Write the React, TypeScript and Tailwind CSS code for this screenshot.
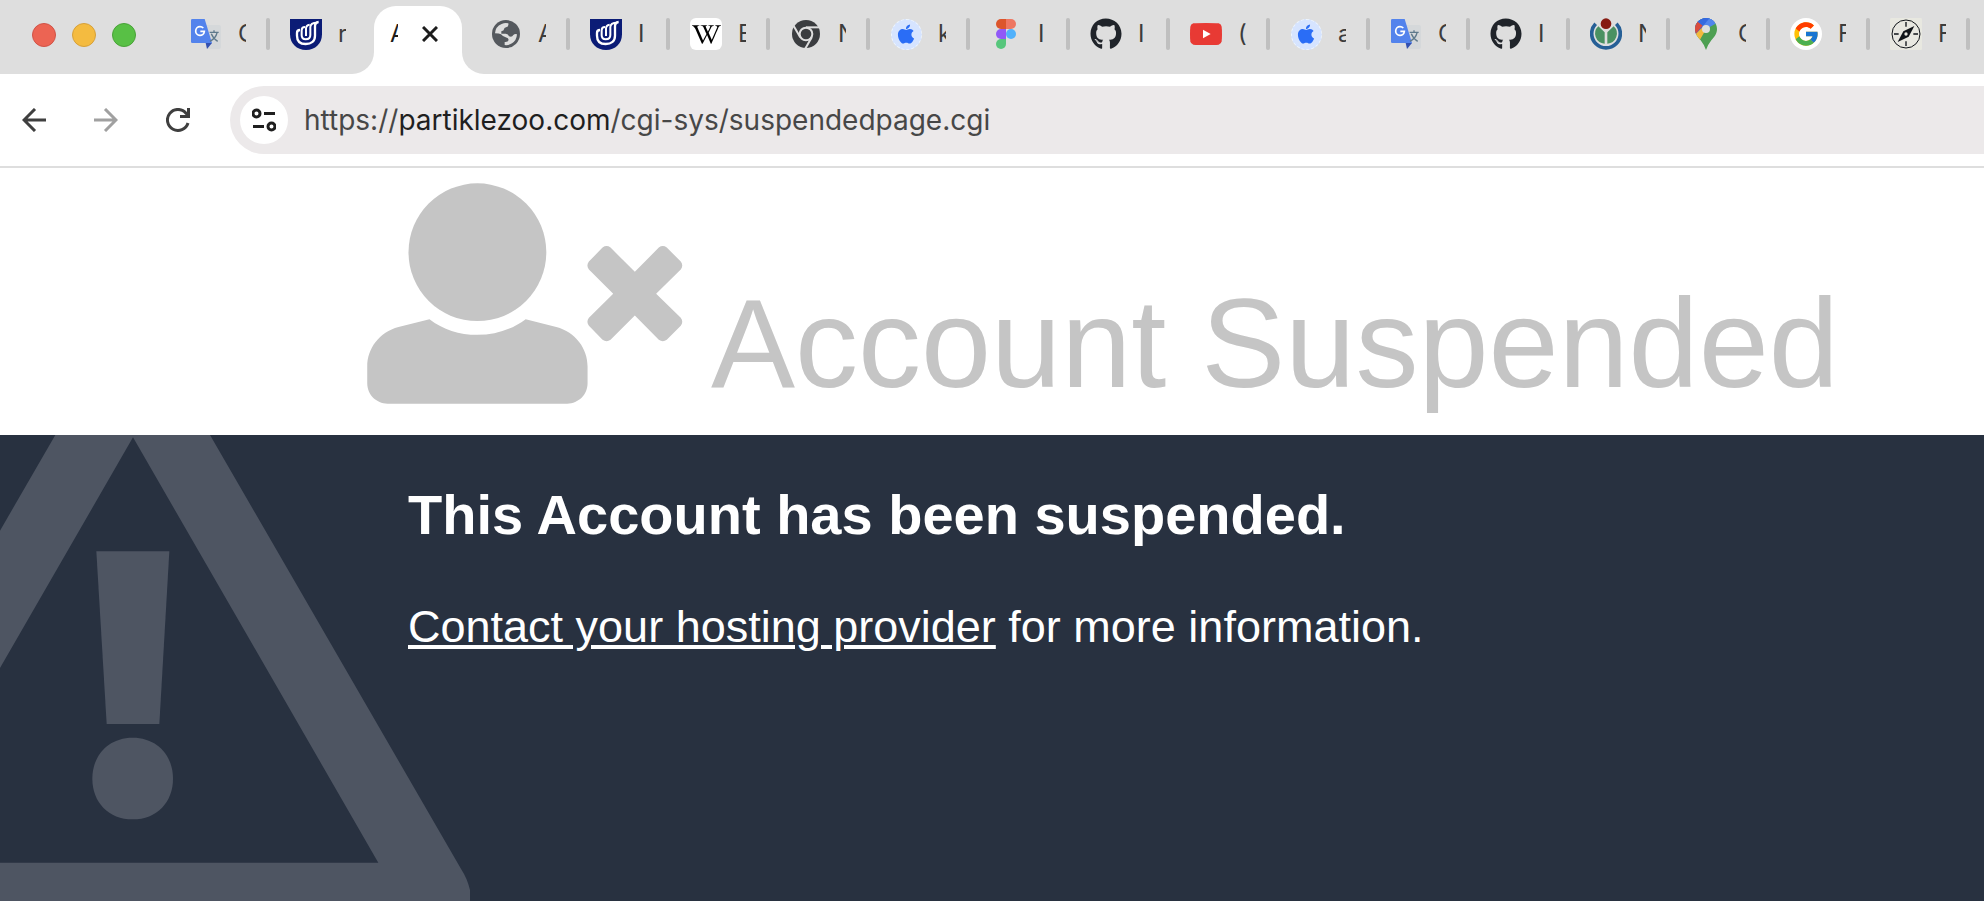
import type { ReactNode } from "react";
import { FaApple, FaGithub, FaWikipediaW } from "react-icons/fa";
import { FcGoogle } from "react-icons/fc";

const TranslateIcon = () => (
  <svg viewBox="0 0 90 90" className="size-[30px]" aria-hidden="true">
    <path d="M36 18H84Q90 18 90 24V84Q90 90 84 90H50Z" fill="#d5d8da" />
    <path d="M44 72H63L48 90Z" fill="#3350b0" />
    <path d="M4 0H41L63 72H4Q0 72 0 68V4Q0 0 4 0Z" fill="#5383ec" />
    <path d="M56 40H83M69 34V40M61 44Q66 58 80 67M78 42Q74 58 57 67" fill="none" stroke="#5f7a8c" strokeWidth="4" />
    <path d="M37 27Q33 23 27 23A13 13 0 1 0 40 37H28" fill="none" stroke="#fff" strokeWidth="5" />
  </svg>
);

const ShieldIcon = () => (
  <svg viewBox="0 0 96 93" className="h-[31px] w-8" aria-hidden="true">
    <path d="M0 0H96V46C96 74 76 93 48 93S0 74 0 46Z" fill="#0b1c76" />
    <g fill="none" stroke="#fff">
      <path d="M30 33Q21 33 21 42V50C21 66 30 75 47 75S75 66 75 50V22Q75 10 86 9" strokeWidth="7" />
      <path d="M45 24Q35 24 35 34V49Q35 61 47 61Q61 61 61 48V24Q61 11 82 11" strokeWidth="6" />
      <path d="M59 17Q48 18 48 29V51" strokeWidth="6" />
    </g>
  </svg>
);

const GlobeIcon = () => (
  <svg viewBox="0 0 84 84" className="size-7" aria-hidden="true">
    <circle cx="42" cy="42" r="42" fill="#55595e" />
    <path
      d="M9 40Q10 20 29 12Q39 7 49 10Q51 21 42 22Q36 23 36 28Q36 33 28 34V41H41Q49 42 51 49Q60 53 64 45Q69 40 75 43Q74 61 60 70Q49 77 38 75V66Q48 67 50 60Q50 54 41 52Q34 51 27 43Q22 40 9 40Z"
      fill="#dedede"
    />
  </svg>
);

const WikipediaIcon = () => (
  <span className="flex size-8 items-center justify-center rounded-md bg-white text-black">
    <FaWikipediaW className="size-[29px]" aria-hidden="true" />
  </span>
);

const ChromeIcon = () => (
  <svg viewBox="0 0 84 84" className="size-7" aria-hidden="true">
    <circle cx="42" cy="42" r="42" fill="#3b3d40" />
    <circle cx="42" cy="42" r="19" fill="none" stroke="#dedede" strokeWidth="6" />
    <g stroke="#dedede" strokeWidth="6">
      <path d="M42 22H82" />
      <path d="M42 22H82" transform="rotate(120 42 42)" />
      <path d="M42 22H82" transform="rotate(240 42 42)" />
    </g>
  </svg>
);

const AppleIcon = () => (
  <span className="flex size-[31px] items-center justify-center rounded-full border border-dashed border-[#edf5ff] bg-[#d6e4ff] text-[#2a6df6]">
    <FaApple className="size-[22px]" aria-hidden="true" />
  </span>
);

const FigmaIcon = () => (
  <svg viewBox="0 0 20 30" className="h-[30px] w-5" aria-hidden="true">
    <path d="M10 0H5A5 5 0 0 0 5 10H10Z" fill="#dc552b" />
    <path d="M10 0H15A5 5 0 0 1 15 10H10Z" fill="#ee7762" />
    <path d="M10 10H5A5 5 0 0 0 5 20H10Z" fill="#9159f7" />
    <circle cx="15" cy="15" r="5" fill="#50b1fb" />
    <path d="M10 20H5A5 5 0 1 0 10 25Z" fill="#57c67c" />
  </svg>
);

const GithubIcon = () => <FaGithub className="size-8 text-[#20242a]" aria-hidden="true" />;

const YoutubeIcon = () => (
  <svg viewBox="0 0 96 66" className="h-[22px] w-8" aria-hidden="true">
    <path d="M48 0Q74 0 86 1Q94 3 95 11Q96 20 96 33T95 55Q94 63 86 65Q74 66 48 66T10 65Q2 63 1 55Q0 46 0 33T1 11Q2 3 10 1Q22 0 48 0Z" fill="#e83a34" />
    <path d="M39 20L62 33L39 46Z" fill="#fff" />
  </svg>
);

const CommunityIcon = () => (
  <svg viewBox="0 0 96 96" className="size-8" aria-hidden="true">
    <path d="M17 17A43 43 0 1 0 79 17" fill="none" stroke="#265f96" strokeWidth="11" />
    <path d="M25 25L44 43V77A30 30 0 0 1 25 25Z" fill="#4a9162" />
    <path d="M71 25L52 43V77A30 30 0 0 0 71 25Z" fill="#4a9162" />
    <circle cx="48" cy="17" r="16" fill="#861b12" />
  </svg>
);

const MapsIcon = () => (
  <svg viewBox="0 0 66 96" className="h-8 w-[22px]" aria-hidden="true">
    <defs>
      <clipPath id="map-pin">
        <path d="M33 0C52 0 66 15 66 33C66 48 58 56 49 67Q38 81 33 96Q28 81 17 67C8 56 0 48 0 33C0 15 14 0 33 0Z" />
      </clipPath>
    </defs>
    <g clipPath="url(#map-pin)">
      <rect width="66" height="96" fill="#4d9f52" />
      <path d="M0 50L33 33L62 0L0 0Z" fill="#3569df" />
      <path d="M33 0H66V15L33 33Z" fill="#5185ec" />
      <path d="M62 4L33 34L14 67L0 50L20 30Z" fill="#f2b93c" />
      <path d="M42 0H66V6L33 33L24 22Z" fill="#5185ec" />
      <path d="M8 10L24 22L0 50V10Z" fill="#d94c3d" />
      <path d="M6 10Q20 -4 44 0L24 24Z" fill="#3569df" />
    </g>
    <circle cx="33" cy="33" r="12" fill="#dedede" />
  </svg>
);

const GoogleIcon = () => (
  <span className="flex size-8 items-center justify-center rounded-full bg-white">
    <FcGoogle className="size-7" aria-hidden="true" />
  </span>
);

const CompassIcon = () => (
  <svg viewBox="0 0 96 96" className="size-8" aria-hidden="true">
    <rect width="96" height="96" rx="4" fill="#e8e8e0" />
    <circle cx="48" cy="48" r="42" fill="none" stroke="#101418" strokeWidth="3" />
    <path d="M48 12V26M48 70V84M12 48H26M70 48H84" stroke="#101418" strokeWidth="4" />
    <path d="M73 24L56 56L23 72L40 40Z" fill="#101418" />
    <circle cx="48" cy="48" r="5" fill="#e8e8e0" />
  </svg>
);

type Tab = { title: string; icon: ReactNode };

const tabsBefore: Tab[] = [
  { title: "G", icon: <TranslateIcon /> },
  { title: "r", icon: <ShieldIcon /> },
];

const tabsAfter: Tab[] = [
  { title: "A", icon: <GlobeIcon /> },
  { title: "I", icon: <ShieldIcon /> },
  { title: "E", icon: <WikipediaIcon /> },
  { title: "N", icon: <ChromeIcon /> },
  { title: "k", icon: <AppleIcon /> },
  { title: "I", icon: <FigmaIcon /> },
  { title: "I", icon: <GithubIcon /> },
  { title: "(", icon: <YoutubeIcon /> },
  { title: "a", icon: <AppleIcon /> },
  { title: "G", icon: <TranslateIcon /> },
  { title: "I", icon: <GithubIcon /> },
  { title: "N", icon: <CommunityIcon /> },
  { title: "G", icon: <MapsIcon /> },
  { title: "F", icon: <GoogleIcon /> },
  { title: "F", icon: <CompassIcon /> },
];

function TabItem({ tab, separator = true }: { tab: Tab; separator?: boolean }) {
  return (
    <button type="button" className="flex h-8 w-25 shrink-0 items-center pl-5">
      <span className="flex size-8 shrink-0 items-center justify-center">{tab.icon}</span>
      <span className="ml-4 w-2 overflow-hidden text-left text-2xl whitespace-nowrap text-[#3c3c3c]">{tab.title}</span>
      {separator && <span className="ml-auto h-8 w-1 rounded-sm bg-[#bfbfbf]" />}
    </button>
  );
}

function TabStrip() {
  return (
    <div className="flex h-[74px] overflow-hidden bg-[#dedede] font-['Inter',sans-serif]">
      <div className="flex w-[170px] shrink-0 gap-4 pt-[23px] pl-8">
        <button type="button" aria-label="Close window" className="size-6 rounded-full border border-[#d05347] bg-[#ec6453]" />
        <button type="button" aria-label="Minimize window" className="size-6 rounded-full border border-[#d6a03a] bg-[#f4bb40]" />
        <button type="button" aria-label="Zoom window" className="size-6 rounded-full border border-[#49a238] bg-[#58c045]" />
      </div>
      <div className="flex pt-[18px]">
        {tabsBefore.map((tab, i) => (
          <TabItem key={i} tab={tab} separator={i === 0} />
        ))}
        <div className="relative -mt-3 mr-2 ml-1 flex h-[68px] w-22 shrink-0 items-center rounded-t-[22px] bg-white pb-3 pl-4">
          <span className="absolute bottom-0 -left-[22px] size-[22px] bg-white">
            <span className="block size-full rounded-br-[22px] bg-[#dedede]" />
          </span>
          <span className="w-2 overflow-hidden text-2xl whitespace-nowrap text-[#1c1c1c]">A</span>
          <button type="button" aria-label="Close tab" className="ml-6">
            <svg viewBox="0 0 16 16" className="size-4" aria-hidden="true">
              <path d="M1 1L15 15M15 1L1 15" stroke="#1c1c1c" strokeWidth="3" />
            </svg>
          </button>
          <span className="absolute -right-[22px] bottom-0 size-[22px] bg-white">
            <span className="block size-full rounded-bl-[22px] bg-[#dedede]" />
          </span>
        </div>
        {tabsAfter.map((tab, i) => (
          <TabItem key={i} tab={tab} />
        ))}
      </div>
    </div>
  );
}

function Toolbar() {
  return (
    <div className="flex items-center border-b-2 border-[#dedede] bg-white py-3 font-['Inter',sans-serif]">
      <div className="flex w-[230px] shrink-0 gap-12 pl-[22px]">
        <button type="button" aria-label="Back" className="text-[#3f3f3f]">
          <svg viewBox="0 0 24 24" className="size-6" fill="none" stroke="currentColor" strokeWidth="3" aria-hidden="true">
            <path d="M24 12H2M13 1L2 12L13 23" />
          </svg>
        </button>
        <button type="button" aria-label="Forward" className="text-[#a0a0a0]">
          <svg viewBox="0 0 24 24" className="size-6" fill="none" stroke="currentColor" strokeWidth="3" aria-hidden="true">
            <path d="M0 12H22M11 1L22 12L11 23" />
          </svg>
        </button>
        <button type="button" aria-label="Reload" className="text-[#3f3f3f]">
          <svg viewBox="0 0 24 24" className="size-6" fill="none" stroke="currentColor" strokeWidth="3" aria-hidden="true">
            <path d="M22 15A10.5 10.5 0 1 1 20 5.200L22.500 8.500M22.500 0V8.500H14" />
          </svg>
        </button>
      </div>
      <div className="flex h-[68px] grow items-center rounded-l-full bg-[#ece9ea] pl-[10px]">
        <button type="button" aria-label="Site information" className="flex size-12 items-center justify-center rounded-full bg-white text-[#1f1f1f]">
          <svg viewBox="0 0 24 24" className="size-6" fill="none" stroke="currentColor" strokeWidth="3" aria-hidden="true">
            <circle cx="4.500" cy="5.500" r="3.500" />
            <path d="M12 5.500H23M1 18.500H12" />
            <circle cx="19.500" cy="18.500" r="3.500" />
          </svg>
        </button>
        <p className="ml-4 text-[28px] leading-9 text-[#474747]">
          https://<span className="text-[#1f1f1f]">partiklezoo.com</span>/cgi-sys/suspendedpage.cgi
        </p>
      </div>
    </div>
  );
}

const SuspendedUserIcon = () => (
  <svg viewBox="82 68 948 664" className="h-[221px] w-[316px] shrink-0" fill="#c5c5c5" aria-hidden="true">
    <circle cx="413" cy="276" r="207" />
    <path d="M269 477C310 508 358 524 413 524S516 508 558 477L650 501C708 517 744 565 744 620V670C744 704 717 731 683 731H143C109 731 82 704 82 670V620C82 565 118 517 176 501Z" />
    <path d="M813 262L886 335L958 262Q970 253 982 262L1024 304Q1033 316 1024 328L950 401L1024 473Q1033 485 1024 497L982 539Q970 548 958 539L886 466L813 539Q801 548 789 539L748 497Q739 485 748 473L821 401L748 328Q739 316 748 304L789 262Q801 253 813 262Z" />
  </svg>
);

const WarningIcon = () => (
  <svg viewBox="0 45 1410 1398" className="absolute bottom-0 left-0 h-[466px] w-[470px]" fill="#4e5562" aria-hidden="true">
    <path fillRule="evenodd" d="M166 45H630L1385 1350Q1402 1376 1410 1410V1443H0V1328H1135L399 52L0 744V332Z" />
    <path d="M289 394H508L478 912H320Z" />
    <path d="M398 953C470 953 519 1005 519 1076S470 1198 398 1198S277 1147 277 1076S326 953 398 953Z" />
  </svg>
);

export default function App() {
  return (
    <div className="min-h-screen overflow-x-hidden bg-white font-['Liberation_Sans',Arial,sans-serif]">
      <TabStrip />
      <Toolbar />
      <header className="flex items-end pt-[15px] pb-[31px] pl-[367px]">
        <SuspendedUserIcon />
        <h1 className="ml-7 text-[126px] leading-[120px] whitespace-nowrap text-[#c5c5c5]">Account Suspended</h1>
      </header>
      <main className="relative min-h-[466px] overflow-hidden bg-[#283140] pt-12 pl-[408px] text-white">
        <WarningIcon />
        <div className="relative">
          <h2 className="text-[56px] leading-16 font-bold">This Account has been suspended.</h2>
          <p className="mt-13 text-[45px] leading-14">
            <a href="#contact" className="underline decoration-4 underline-offset-3">
              Contact your hosting provider
            </a>{" "}
            for more information.
          </p>
        </div>
      </main>
    </div>
  );
}
